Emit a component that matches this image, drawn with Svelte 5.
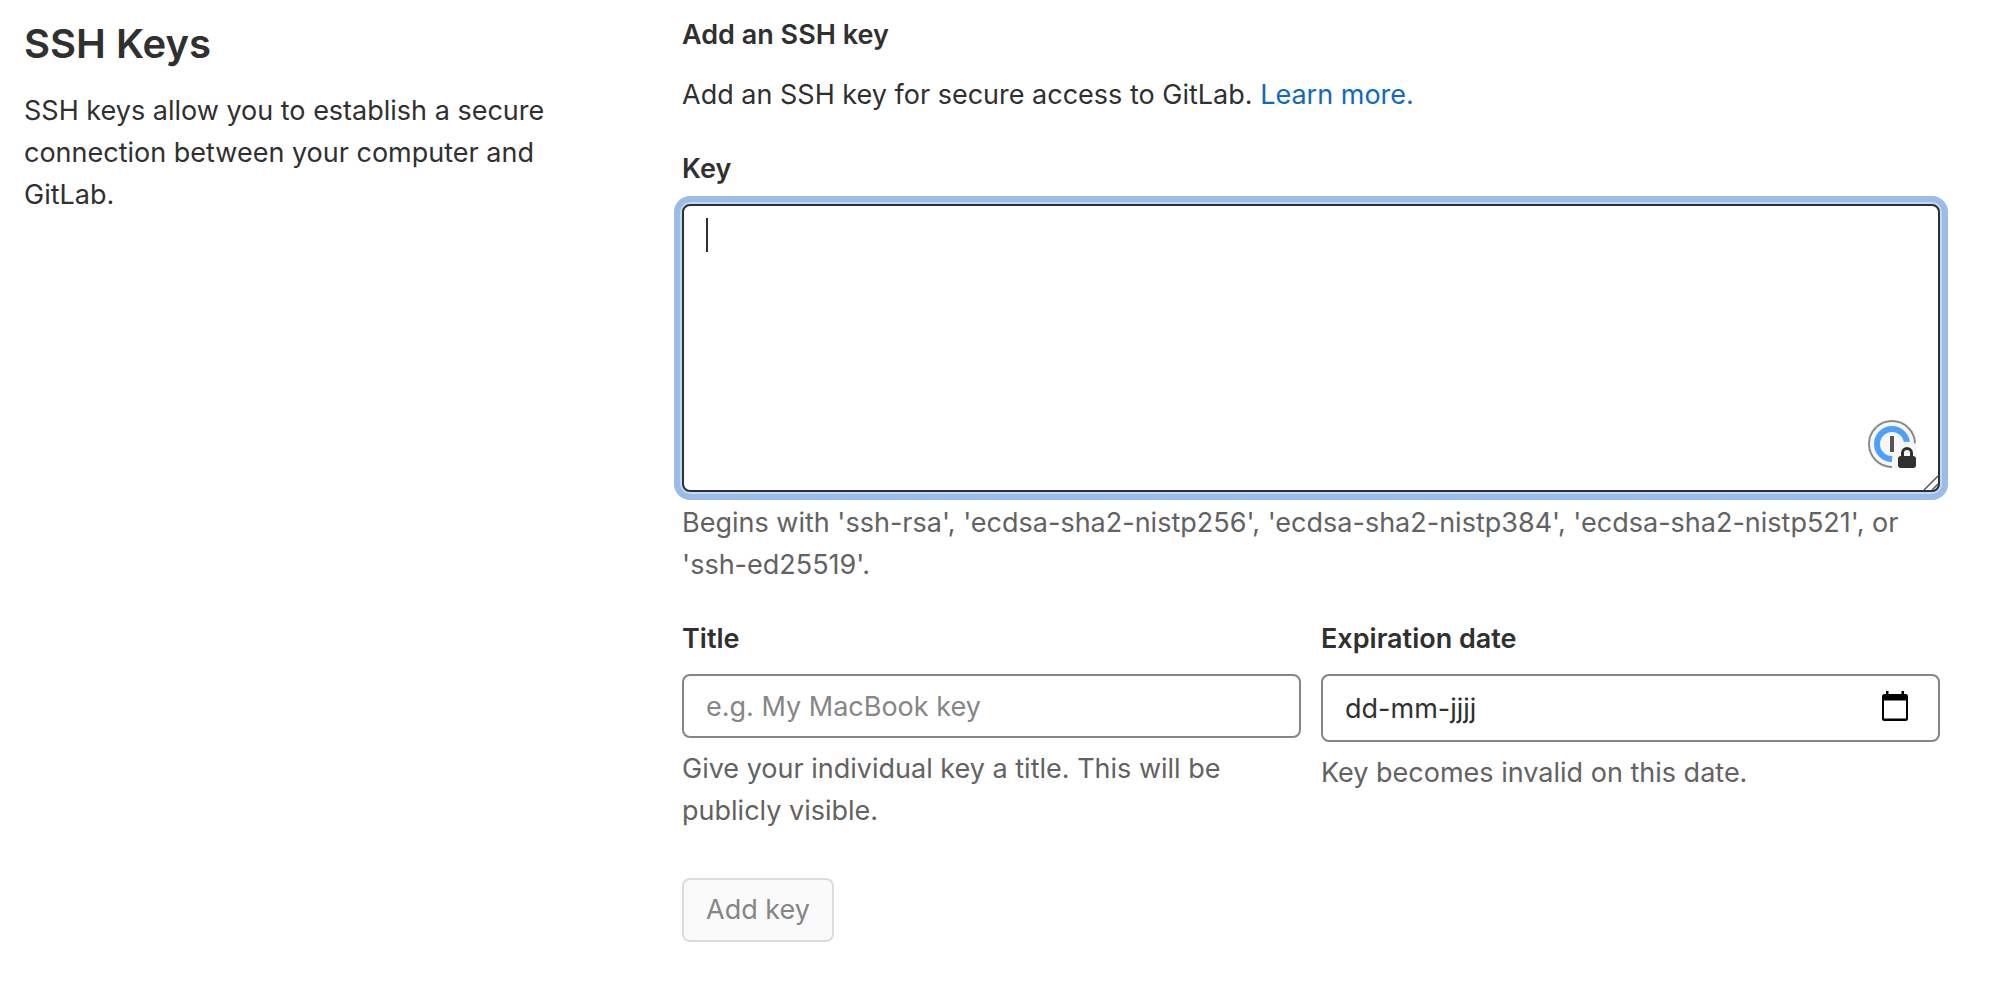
<script>
  let key = $state('');
  let title = $state('');
  let expires = $state('dd-mm-jjjj');
</script>

<main class="settings">
  <section class="intro">
    <h1>SSH Keys</h1>
    <p>SSH keys allow you to establish a secure connection between your computer and GitLab.</p>
  </section>

  <form class="form" onsubmit={(e) => e.preventDefault()}>
    <h2>Add an SSH key</h2>
    <p class="lead">Add an SSH key for secure access to GitLab. <a href="#learn">Learn more.</a></p>

    <div class="group">
      <label for="key">Key</label>
      <div class="key-box">
        <textarea id="key" bind:value={key}></textarea>
        <span class="caret"></span>
        <svg class="manager" viewBox="0 0 50 50" aria-hidden="true">
          <circle cx="25" cy="25" r="23" fill="#f7f7f7" stroke="#8a8a8a" stroke-width="2" />
          <circle cx="25" cy="25" r="15" fill="#f7f7f7" stroke="#4f9fff" stroke-width="6" />
          <rect x="23" y="17" width="4" height="16" fill="#555" />
          <path d="M25 50V39Q28 28 33 24Q40 21 50 25V50Z" fill="#f7f7f7" />
          <rect x="31" y="37" width="18" height="12" rx="3" fill="#303030" />
          <path d="M35.500 38V34a4.500 4.500 0 0 1 9 0V38" fill="none" stroke="#303030" stroke-width="3" />
        </svg>
        <svg class="grip" viewBox="0 0 16 16" aria-hidden="true">
          <path d="M1 15L15 1M9 15L15 9" stroke="#555" stroke-width="1.500" />
        </svg>
      </div>
      <p class="hint">Begins with 'ssh-rsa', 'ecdsa-sha2-nistp256', 'ecdsa-sha2-nistp384', 'ecdsa-sha2-nistp521', or 'ssh-ed25519'.</p>
    </div>

    <div class="row">
      <div class="group">
        <label for="title">Title</label>
        <input id="title" type="text" placeholder="e.g. My MacBook key" bind:value={title} />
        <p class="hint">Give your individual key a title. This will be publicly visible.</p>
      </div>
      <div class="group">
        <label for="expires">Expiration date</label>
        <div class="date-box">
          <input id="expires" type="text" bind:value={expires} />
          <button class="picker" type="button" aria-label="Show date picker">
            <svg viewBox="0 0 28 30" aria-hidden="true">
              <path fill-rule="evenodd" d="M5 0h2.500v3h13V0H23v3h1.500A2.500 2.500 0 0 1 27 5.500v22a2.500 2.500 0 0 1-2.500 2.500h-21A2.500 2.500 0 0 1 1 27.500v-22A2.500 2.500 0 0 1 3.500 3H5zM3 9.500V27.500h22V9.500z" />
            </svg>
          </button>
        </div>
        <p class="hint">Key becomes invalid on this date.</p>
      </div>
    </div>

    <button class="submit" type="submit" disabled>Add key</button>
  </form>
</main>

<style>
  :global(body) {
    background: #fff;
  }
  .settings {
    display: grid;
    grid-template-columns: minmax(0, 10fr) minmax(0, 21fr);
    column-gap: 59px;
    padding: 14px 58px 40px 24px;
    font-family: Inter, 'Noto Sans', sans-serif;
    font-size: 27px;
    line-height: 42px;
    color: #303030;
  }
  h1,
  h2,
  p {
    margin: 0;
  }
  .intro {
    padding-top: 4px;
  }
  h1 {
    margin-bottom: 20px;
    font-size: 40px;
    line-height: 52px;
    font-weight: 600;
  }
  h2,
  label {
    font-size: 27px;
    font-weight: 600;
  }
  h2 {
    margin-bottom: 18px;
  }
  .lead {
    margin-bottom: 32px;
  }
  a {
    color: #1068bf;
    text-decoration: none;
  }
  .group {
    display: flex;
    flex-direction: column;
    margin-bottom: 32px;
  }
  label {
    margin-bottom: 14px;
  }
  .hint {
    margin-top: 10px;
    color: #626262;
  }
  .key-box,
  .date-box {
    position: relative;
    display: flex;
  }
  textarea,
  input {
    box-sizing: border-box;
    width: 100%;
    margin: 0;
    padding: 0 22px;
    border: 2px solid #868686;
    border-radius: 8px;
    outline: none;
    background: #fff;
    font: inherit;
    color: #303030;
  }
  textarea {
    height: 288px;
    padding: 10px 22px;
    border-color: #303030;
    box-shadow: 0 0 0 2px #c3d8f1, 0 0 0 8px #9abce8;
    resize: none;
  }
  input {
    height: 64px;
  }
  .date-box input {
    height: 68px;
  }
  input::placeholder {
    color: #868686;
    opacity: 1;
  }
  .caret {
    position: absolute;
    top: 14px;
    left: 24px;
    width: 2px;
    height: 34px;
    background: #303030;
  }
  .manager {
    position: absolute;
    right: 23px;
    bottom: 23px;
    width: 50px;
    height: 50px;
  }
  .grip {
    position: absolute;
    right: 1px;
    bottom: 1px;
    width: 16px;
    height: 16px;
  }
  .picker {
    position: absolute;
    top: 17px;
    right: 31px;
    display: flex;
    padding: 0;
    border: 0;
    background: none;
  }
  .picker svg {
    width: 28px;
    height: 30px;
  }
  .row {
    display: grid;
    grid-template-columns: repeat(2, minmax(0, 1fr));
    column-gap: 20px;
    margin-bottom: 14px;
  }
  .submit {
    height: 64px;
    padding: 0 22px;
    border: 2px solid #dcdcdc;
    border-radius: 8px;
    background: #fafafa;
    font: inherit;
    color: #868686;
  }
</style>
